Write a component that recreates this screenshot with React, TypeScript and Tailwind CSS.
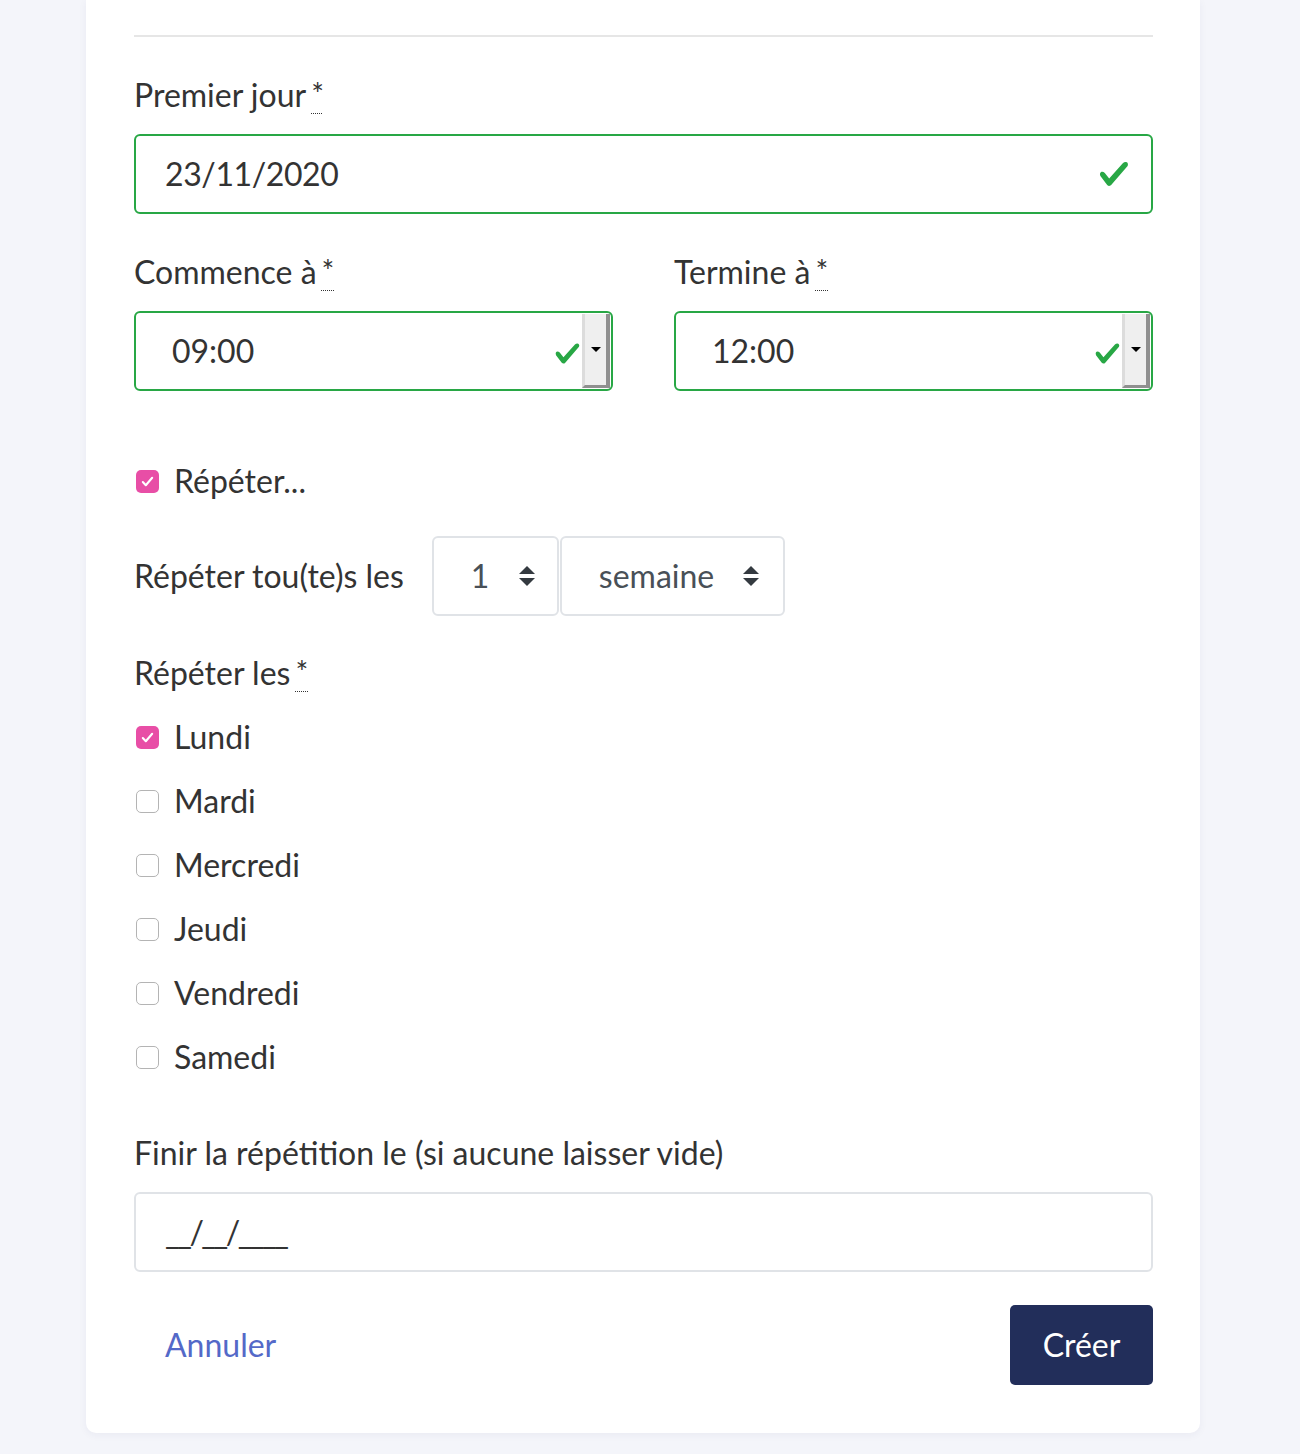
import type { ReactElement } from "react";

const FONT = { fontFamily: "Lato, 'Open Sans', sans-serif" };

/** Show and return the bootstrap-like valid check mark. */
function renderValidIcon(className: string): ReactElement {
  return (
    <svg className={className} viewBox="0 0 8 8" aria-hidden="true">
      <path
        fill="#28a745"
        d="M2.3 6.73L.6 4.53c-.4-1.04.46-1.4 1.1-.8l1.1 1.4 3.4-3.8c.6-.63 1.6-.27 1.2.7l-4 4.6c-.43.5-.8.4-1.1.1z"
      />
    </svg>
  );
}

/** Show and return the up/down select arrows. */
function renderSelectArrows(): ReactElement {
  return (
    <svg className="h-[20px] w-[16px]" viewBox="0 0 4 5" aria-hidden="true">
      <path fill="#343a40" d="M2 0L0 2h4zm0 5L0 3h4z" />
    </svg>
  );
}

/** Show and return a required field label. */
function renderLabel(text: string, required: boolean): ReactElement {
  return (
    <label className="flex h-[44px] items-center text-[32px] text-[#333333]">
      <span>{text}</span>
      {required && (
        <abbr
          title="requis"
          className="ml-[5px] self-start pt-[4px] text-[30px] leading-[32px] underline decoration-dotted decoration-[1px] underline-offset-[8px]"
        >
          *
        </abbr>
      )}
    </label>
  );
}

/** Show and return a custom checkbox with its label. */
function renderCheckbox(text: string, checked: boolean): ReactElement {
  return (
    <div className="flex h-[44px] items-center pl-[2px]">
      {checked ? (
        <span className="flex h-[23px] w-[23px] items-center justify-center rounded-[5px] bg-[#e84ea6]">
          <svg className="h-[15px] w-[15px]" viewBox="0 0 16 16" aria-hidden="true">
            <path
              d="M3 8.5l3.2 3.5L13 4"
              fill="none"
              stroke="#ffffff"
              strokeWidth="2.2"
              strokeLinecap="round"
              strokeLinejoin="round"
            />
          </svg>
        </span>
      ) : (
        <span className="h-[23px] w-[23px] rounded-[5px] border-[1.5px] border-[#b4b4b4] bg-white" />
      )}
      <span className="ml-[15px] text-[32px] text-[#333333]">{text}</span>
    </div>
  );
}

/** Show and return a time input with its spinner button. */
function renderTimeInput(label: string, value: string): ReactElement {
  return (
    <div className="flex-1">
      {renderLabel(label, true)}
      <div className="mt-[17px] flex h-[80px] items-stretch rounded-[6px] border-2 border-[#28a745] bg-white">
        <div className="flex flex-1 items-center pl-[36px] text-[32px] text-[#333333]">{value}</div>
        <div className="flex items-center pr-[1px] pt-[4px]">{renderValidIcon("h-[27px] w-[27px]")}</div>
        <div className="my-[1px] mr-[1px] flex w-[28px] items-center justify-center border-l-[3px] border-r-[4px] border-b-[3px] border-l-[#dcdcdc] border-r-[#8f8f8f] border-b-[#8f8f8f] bg-[#efefef]">
          <span className="h-0 w-0 border-x-[5px] border-t-[5px] border-x-transparent border-t-black" />
        </div>
      </div>
    </div>
  );
}

const DAYS: [string, boolean][] = [
  ["Lundi", true],
  ["Mardi", false],
  ["Mercredi", false],
  ["Jeudi", false],
  ["Vendredi", false],
  ["Samedi", false],
];

export default function App() {
  return (
    <div className="min-h-[1454px] bg-[#f4f5fa]" style={FONT}>
      <div className="ml-[86px] w-[1114px] rounded-b-[10px] bg-white pl-[48px] pr-[47px] pt-[35px] pb-[48px] shadow-[0_2px_8px_rgba(30,40,90,0.05)]">
        <div className="h-[2px] bg-[#e6e6e6]" />

        <div className="mt-[36px]">
          {renderLabel("Premier jour", true)}
          <div className="mt-[17px] flex h-[80px] items-center justify-between rounded-[6px] border-2 border-[#28a745] bg-white pl-[29px] pr-[21px]">
            <span className="text-[32px] tracking-[-0.4px] text-[#333333]">23/11/2020</span>
            {renderValidIcon("h-[32px] w-[32px]")}
          </div>
        </div>

        <div className="mt-[36px] flex gap-[61px]">
          {renderTimeInput("Commence à", "09:00")}
          {renderTimeInput("Termine à", "12:00")}
        </div>

        <div className="mt-[68px]">{renderCheckbox("Répéter...", true)}</div>

        <div className="mt-[33px] flex h-[80px] items-center">
          <span className="text-[32px] text-[#333333]">Répéter tou(te)s les</span>
          <div className="ml-[28px] flex h-[80px] w-[127px] items-center justify-between rounded-[6px] border-2 border-[#e0e3e7] pl-[37px] pr-[22px]">
            <span className="text-[32px] text-[#495057]">1</span>
            {renderSelectArrows()}
          </div>
          <div className="ml-[1px] flex h-[80px] w-[225px] items-center justify-between rounded-[6px] border-2 border-[#e0e3e7] pl-[37px] pr-[24px]">
            <span className="text-[32px] text-[#495057]">semaine</span>
            {renderSelectArrows()}
          </div>
        </div>

        <div className="mt-[35px]">{renderLabel("Répéter les", true)}</div>

        <div className="mt-[20px] flex flex-col gap-[20px]">
          {DAYS.map(([day, checked]) => (
            <div key={day}>{renderCheckbox(day, checked)}</div>
          ))}
        </div>

        <div className="mt-[52px]">
          {renderLabel("Finir la répétition le (si aucune laisser vide)", false)}
          <div className="mt-[17px] flex h-[80px] items-center rounded-[6px] border-2 border-[#e0e3e7] bg-white pl-[29px]">
            <span className="text-[32px] tracking-[-2.5px] text-[#333333]">__/__/____</span>
          </div>
        </div>

        <div className="mt-[33px] flex items-center justify-between">
          <a className="ml-[31px] text-[32px] text-[#5469c8]" href="#">
            Annuler
          </a>
          <button className="flex h-[80px] w-[143px] items-center justify-center rounded-[5px] bg-[#222e5a] text-[32px] text-white">
            Créer
          </button>
        </div>
      </div>
    </div>
  );
}
